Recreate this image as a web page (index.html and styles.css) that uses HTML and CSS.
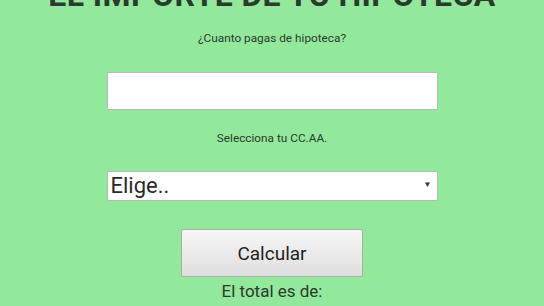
FILE: index.html
```html
<!DOCTYPE html>
<html lang="es">
<head>
<meta charset="utf-8">
<title>Hipoteca</title>
<link rel="stylesheet" href="styles.css">
</head>
<body>
<main class="page">
  <h1 class="title">EL IMPORTE DE TU HIPOTECA</h1>
  <p class="label label-first">¿Cuanto pagas de hipoteca?</p>
  <input class="field" type="text">
  <p class="label label-second">Selecciona tu CC.AA.</p>
  <div class="select-wrap">
    <select class="select">
      <option>Elige..</option>
    </select>
    <span class="arrow">▼</span>
  </div>
  <button class="btn" type="button">Calcular</button>
  <p class="total">El total es de:</p>
</main>
</body>
</html>
```
FILE: styles.css
```css
html, body {
  margin: 0;
  padding: 0;
  background: #93e99b;
  overflow: hidden;
}
.page {
  display: flex;
  flex-direction: column;
  align-items: center;
  font-family: Roboto, "Liberation Sans", sans-serif;
  color: #2b3a2d;
}
.title {
  margin: -23px 0 0;
  font-size: 32px;
  line-height: 36px;
  font-weight: 700;
  color: #2c3a2e;
  letter-spacing: 0.4px;
  white-space: nowrap;
}
.label {
  margin: 0;
  font-size: 11.8px;
  line-height: 14px;
  color: #2a3a2c;
}
.label-first {
  margin-top: 18px;
}
.field {
  box-sizing: border-box;
  width: 331px;
  height: 38px;
  margin-top: 27px;
  border: 1px solid #b3bdb4;
  background: #fff;
  border-radius: 1px;
  padding: 0 6px;
}
.label-second {
  margin-top: 21px;
}
.select-wrap {
  position: relative;
  width: 331px;
  height: 30px;
  margin-top: 26px;
}
.select {
  -webkit-appearance: none;
  appearance: none;
  box-sizing: border-box;
  width: 100%;
  height: 30px;
  border: 1px solid #b3bdb4;
  background: #fff;
  border-radius: 1px;
  font-family: Roboto, "Liberation Sans", sans-serif;
  font-size: 22px;
  font-weight: 400;
  color: #2a2a2a;
  padding: 0 0 0 3px;
  line-height: 28px;
}
.arrow {
  position: absolute;
  right: 6px;
  top: 9px;
  font-size: 8px;
  line-height: 10px;
  color: #333;
  pointer-events: none;
}
.btn {
  box-sizing: border-box;
  width: 182px;
  height: 48px;
  margin-top: 28px;
  border: 1px solid #a9b0aa;
  border-radius: 2px;
  background: linear-gradient(#f7f7f7, #dedede);
  font-family: Roboto, "Liberation Sans", sans-serif;
  font-size: 19px;
  font-weight: 400;
  color: #1f1f1f;
}
.total {
  margin: 4px 0 0;
  font-size: 17px;
  line-height: 20px;
  color: #2b3a2d;
}
```
